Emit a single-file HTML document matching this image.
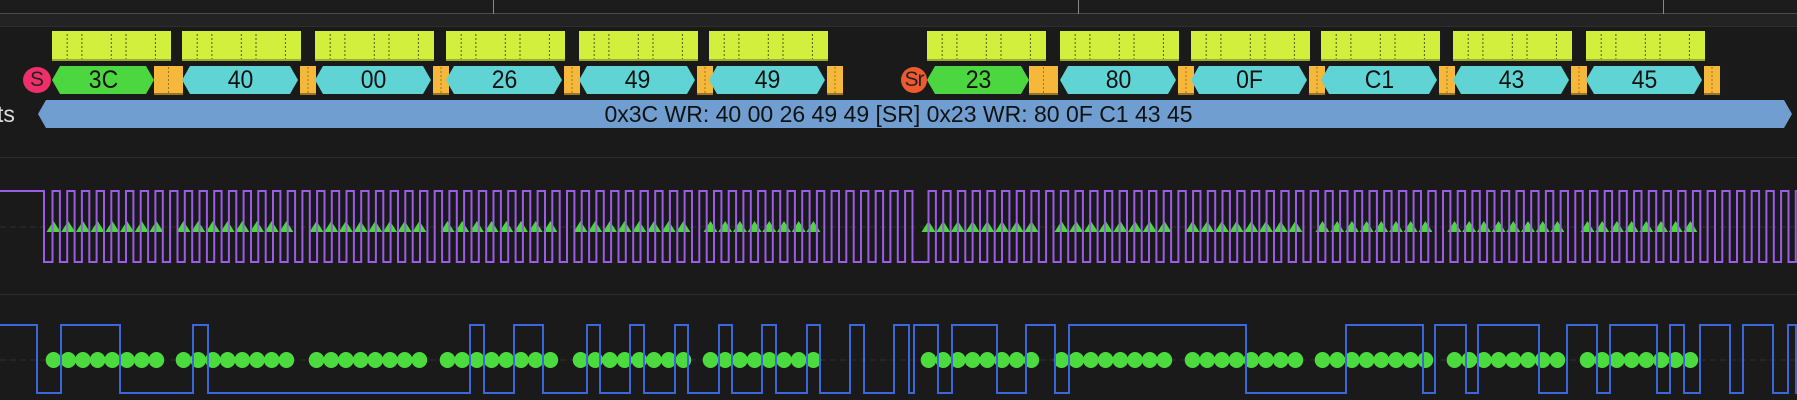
<!DOCTYPE html>
<html><head><meta charset="utf-8">
<style>
html,body{margin:0;padding:0;background:#1a1a1a;width:1797px;height:400px;overflow:hidden;}
#wrap{position:relative;width:1797px;height:400px;font-family:"Liberation Sans",sans-serif;}
svg{position:absolute;left:0;top:0;}
.lb{position:absolute;top:66px;height:28px;line-height:29px;text-align:center;font-size:25px;color:#111;transform:scaleX(0.92);}
.bar{position:absolute;left:0;top:100px;width:1797px;text-align:center;font-size:23px;line-height:28px;color:#111;}
.ts{position:absolute;left:-3px;top:100px;font-size:23px;line-height:28px;color:#ddd;}
.circ{position:absolute;top:67px;height:26px;line-height:26px;text-align:center;font-size:21px;color:#222;}
</style></head><body><div id="wrap">
<svg id="s" width="1797" height="400"></svg>
<div class="ts">ts</div>
<div class="bar">0x3C WR: 40 00 26 49 49 [SR] 0x23 WR: 80 0F C1 43 45</div>
<div class="circ" style="left:23px;width:28px;">S</div>
<div class="circ" style="left:900px;width:28px;letter-spacing:-1px;">Sr</div>
<div class="lb" style="left:53px;width:101px">3C</div>
<div class="lb" style="left:183px;width:115px">40</div>
<div class="lb" style="left:316px;width:115px">00</div>
<div class="lb" style="left:447px;width:115px">26</div>
<div class="lb" style="left:580px;width:115px">49</div>
<div class="lb" style="left:710px;width:115px">49</div>
<div class="lb" style="left:928px;width:101px">23</div>
<div class="lb" style="left:1061px;width:115px">80</div>
<div class="lb" style="left:1192px;width:115px">0F</div>
<div class="lb" style="left:1322px;width:115px">C1</div>
<div class="lb" style="left:1454px;width:115px">43</div>
<div class="lb" style="left:1587px;width:115px">45</div>
</div>
<script>
var s='';
function R(x,y,w,h,c){s+='<rect x="'+x+'" y="'+y+'" width="'+w+'" height="'+h+'" fill="'+c+'"/>';}
R(0,0,1797,13,'#1c1c1c');R(0,13,1797,1,'#4a4a4a');R(0,14,1797,12,'#232323');R(0,26,1797,1,'#2e2e2e');
[493,1078,1663].forEach(function(x){R(x,0,1,14,'#888');});
R(0,157,1797,1,'#2c2c2c');R(0,294,1797,1,'#2c2c2c');
s+='<line x1="0" y1="227" x2="1797" y2="227" stroke="#2e2e2e" stroke-dasharray="6 4"/>';
s+='<line x1="0" y1="360" x2="1797" y2="360" stroke="#2e2e2e" stroke-dasharray="6 4"/>';
s+='<polygon points="38,114 46,100 1784,100 1792,114 1784,128 46,128" fill="#709ed0"/>';
var Ys=[52,182,315,446,579,709,927,1060,1191,1321,1453,1586];
var P=14.7;
Ys.forEach(function(x,i){
 var addr=(i==0||i==6);
 R(x,31,119,30,'#d2ef3e');R(x,59,119,2,'#9aae2a');
 [1,2,4,5,7].forEach(function(k){var lx=x+k*P+0.5;s+='<line x1="'+lx+'" y1="34" x2="'+lx+'" y2="59" stroke="#4e5a14" stroke-dasharray="2 2"/>';});
 var e=addr?x+102:x+116, c=addr?'#4cd640':'#60d4d4';
 s+='<polygon points="'+x+',80 '+(x+8)+',66 '+(e-8)+',66 '+e+',80 '+(e-8)+',94 '+(x+8)+',94" fill="'+c+'"/>';
 var ox=addr?e:x+118, ow=addr?29:16;
 R(ox,66,ow,29,'#f5b83a');R(ox,93,ow,2,'#9a7420');
 s+='<line x1="'+(ox+ow/2)+'" y1="67" x2="'+(ox+ow/2)+'" y2="93" stroke="#9a7420" stroke-dasharray="2 2"/>';
 for(var k=0;k<8;k++){var cx=x+1.5+k*P;
  s+='<polygon points="'+(cx-7)+',232 '+cx+',221 '+(cx+7)+',232" fill="#4cd640"/>';
  s+='<ellipse cx="'+cx+'" cy="360" rx="7.8" ry="8" fill="#4cdb3f"/>';}
});
s+='<ellipse cx="37" cy="80" rx="14" ry="13" fill="#ee2f6a"/>';
s+='<ellipse cx="914" cy="80" rx="13" ry="13" fill="#ee5a30"/>';
var d='M0,191 L44,191 L44,262',H=191,L=262;
var rises=[];for(var t=52.5;t<910;t+=P)rises.push(t);for(var t=928.5;t<1797;t+=P)rises.push(t);
rises.forEach(function(r){d+=' L'+r.toFixed(1)+','+L+' L'+r.toFixed(1)+','+H+' L'+(r+7.4).toFixed(1)+','+H+' L'+(r+7.4).toFixed(1)+','+L;});
d+=' L1797,'+L;
s+='<path d="'+d+'" fill="none" stroke="#9b5ce6" stroke-width="2"/>';
var tr=[37,61,120,193,208,470,484,514,543,587,600,630,644,675,688,719,732,762,776,807,820,850,864,894,909,914,938,952,997,1026,1055,1069,1246,1346,1423,1435,1466,1478,1539,1567,1597,1610,1657,1670,1684,1700,1730,1743,1773,1788,1796];
var hi=true,Hd=325,Ld=393,dd='M0,'+Hd;
tr.forEach(function(x){dd+=' L'+x+','+(hi?Hd:Ld);hi=!hi;dd+=' L'+x+','+(hi?Hd:Ld);});
dd+=' L1797,'+(hi?Hd:Ld);
s+='<path d="'+dd+'" fill="none" stroke="#3a68dc" stroke-width="2"/>';
document.getElementById('s').innerHTML=s;
</script>
</body></html>
